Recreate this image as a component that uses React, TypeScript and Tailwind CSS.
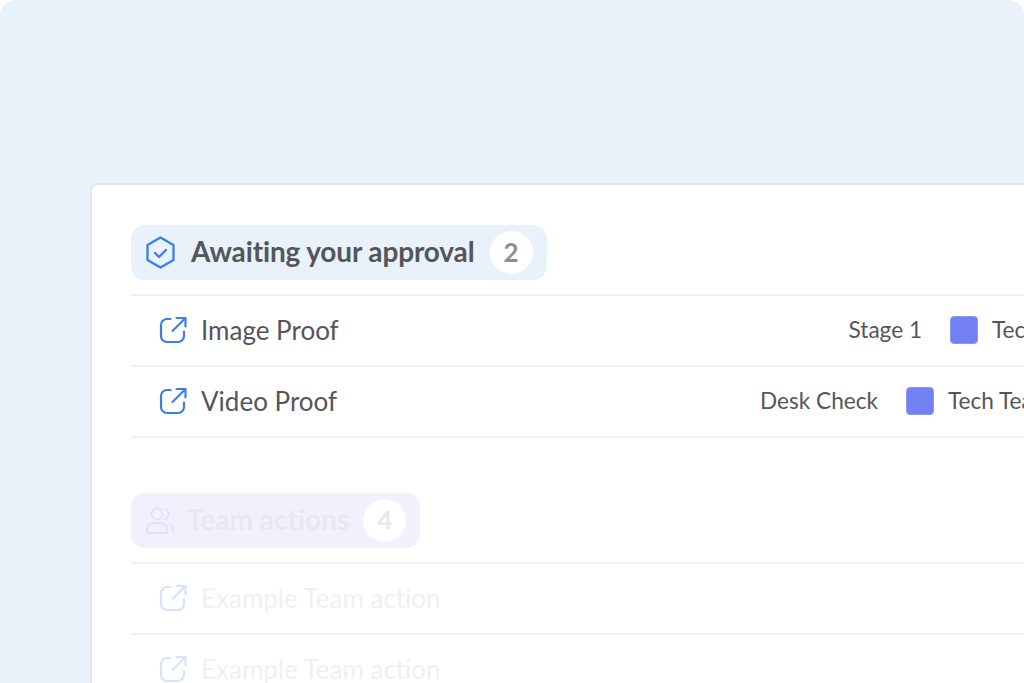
import { CSSProperties } from 'react';

const font: CSSProperties = { fontFamily: '"Lato", "Liberation Sans", sans-serif', fontVariantLigatures: 'none' };

function ShareIcon({ className }: { className?: string }) {
  return (
    <svg viewBox="0 0 28 28" fill="none" stroke="currentColor" strokeWidth="2.200" strokeLinecap="round" strokeLinejoin="round" className={className}>
      <path d="M11.500 3H8a6 6 0 0 0-6 6v11a6 6 0 0 0 6 6h11a6 6 0 0 0 6-6v-4.500" />
      <path d="M17.500 2h9v8.500" />
      <path d="M26 2.500L13.500 15" />
    </svg>
  );
}

function ApprovalIcon() {
  return (
    <svg viewBox="0 0 30 33" fill="none" stroke="currentColor" strokeWidth="2.300" strokeLinecap="round" strokeLinejoin="round" className="w-[30px] h-[33px] text-[#3b7fe0]">
      <path d="M15.500 1.500l13 7.500v15l-13 7.500-13-7.500V9z" />
      <path d="M10 17l4 4 7-7" />
    </svg>
  );
}

function TeamIcon() {
  return (
    <svg viewBox="0 0 30 30" fill="none" stroke="currentColor" strokeWidth="1.800" strokeLinecap="round" strokeLinejoin="round" className="w-[30px] h-[30px] text-[#dfe2fa]">
      <circle cx="12" cy="8" r="5.500" />
      <path d="M20 2.800a5.500 5.500 0 0 1 0 10.400" />
      <path d="M2 27v-4a6 6 0 0 1 6-6h8a6 6 0 0 1 6 6v4z" />
      <path d="M28 27v-4a6 6 0 0 0-3-5" />
    </svg>
  );
}

function Row({ label, stage, team, teamWidth, faded }: { label: string; stage?: string; team?: string; teamWidth?: string; faded?: boolean }) {
  return (
    <div className="h-[71px] flex items-center border-b-2 border-[#f1f1f3] pl-7 pb-px">
      <ShareIcon className={`w-7 h-7 ${faded ? 'text-[#d5e3f8]' : 'text-[#3b7fe0]'}`} />
      <span className={`ml-3.5 text-[26px] flex-1 ${faded ? 'text-[#f0f0f1]' : 'text-[#54565a]'}`}>{label}</span>
      {stage && (
        <div className="flex items-center text-[22.6px] text-[#54565a]">
          <span>{stage}</span>
          <span className="ml-7 w-7 h-7 rounded-[4px] bg-[#7380f3] border border-[#8d98f5]" />
          <span className={`ml-3.5 whitespace-nowrap ${teamWidth}`}>{team}</span>
        </div>
      )}
    </div>
  );
}

export default function App() {
  return (
    <div style={font} className="w-[1024px] h-[683px] overflow-hidden bg-white">
      <div className="w-[1024px] h-[683px] overflow-hidden bg-[#e9f1fb] rounded-t-[16px] pt-[183px] pl-[90px]">
        <div className="w-[1100px] h-[600px] bg-white rounded-[8px] border-2 border-[#e3e5ea] pt-[40px] pl-[39px] pr-[40px]">
          <div className="inline-flex items-center h-[55px] bg-[#e9f1fb] rounded-[14px] px-[14px]">
            <ApprovalIcon />
            <span className="ml-4 pb-[3px] text-[28px] tracking-[-0.14px] font-bold text-[#54565a]">Awaiting your approval</span>
            <span className="ml-[15px] w-[43px] h-[43px] rounded-full bg-white flex items-center justify-center text-[26px] font-bold text-[#8e8f92]">2</span>
          </div>
          <div className="mt-[14px] border-t-2 border-[#f1f1f3]">
            <Row label="Image Proof" stage="Stage 1" team="Tech Team" teamWidth="w-[156px]" />
            <Row label="Video Proof" stage="Desk Check" team="Tech Team" teamWidth="w-[200px]" />
          </div>
          <div className="mt-[55px] inline-flex items-center h-[55px] bg-[#f1f1fd] rounded-[14px] px-[14px]">
            <TeamIcon />
            <span className="ml-3 pb-[3px] text-[28px] font-bold text-[#e8e8ec]">Team actions</span>
            <span className="ml-[14px] w-[43px] h-[43px] rounded-full bg-white flex items-center justify-center text-[26px] font-bold text-[#e8e8ec]">4</span>
          </div>
          <div className="mt-[14px] border-t-2 border-[#f1f1f3]">
            <Row label="Example Team action" faded />
            <Row label="Example Team action" faded />
          </div>
        </div>
      </div>
    </div>
  );
}
